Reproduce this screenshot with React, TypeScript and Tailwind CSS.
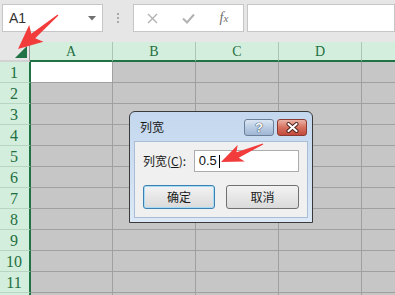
import React from "react";

type Pt = [number, number];

// tapered screenshot-style arrow, tail -> tip
function arrowPoints(tail: Pt, tip: Pt, headLen: number, headW: number, shaftW: number) {
  const dx = tip[0] - tail[0];
  const dy = tip[1] - tail[1];
  const len = Math.hypot(dx, dy);
  const ux = dx / len;
  const uy = dy / len;
  const nx = -uy;
  const ny = ux;
  const base: Pt = [tip[0] - ux * headLen, tip[1] - uy * headLen];
  const barb: Pt = [tip[0] - ux * (headLen + 4), tip[1] - uy * (headLen + 4)];
  const pts: Pt[] = [
    [tail[0] + nx * 0.6, tail[1] + ny * 0.6],
    [base[0] + nx * shaftW, base[1] + ny * shaftW],
    [barb[0] + nx * headW, barb[1] + ny * headW],
    tip,
    [barb[0] - nx * headW, barb[1] - ny * headW],
    [base[0] - nx * shaftW, base[1] - ny * shaftW],
    [tail[0] - nx * 0.6, tail[1] - ny * 0.6],
  ];
  return pts.map((p) => `${p[0].toFixed(1)},${p[1].toFixed(1)}`).join(" ");
}

const columns = ["A", "B", "C", "D", ""];
const rows = [1, 2, 3, 4, 5, 6, 7, 8, 9, 10, 11, 0];

function TopBar() {
  return (
    <div className="flex h-[42px] items-start bg-[#e6e6e6] pl-[2px] pt-[4px]">
      <div className="flex h-[28px] w-[101px] items-center justify-between border border-[#c6c6c6] bg-white pl-[6px] pr-[6px]">
        <span className="font-[family-name:'Liberation_Sans',sans-serif] text-[14px] text-[#333]">A1</span>
        <svg width="8" height="5" viewBox="0 0 8 5">
          <polygon points="0,0 8,0 4,4.5" fill="#707070" />
        </svg>
      </div>
      <div className="flex h-[28px] w-[30px] flex-col items-center justify-center gap-[2px]">
        <div className="h-[2px] w-[2px] bg-[#a8a8a8]" />
        <div className="h-[2px] w-[2px] bg-[#a8a8a8]" />
        <div className="h-[2px] w-[2px] bg-[#a8a8a8]" />
      </div>
      <div className="flex h-[28px] w-[111px] items-center border border-[#c6c6c6] bg-white">
        <div className="flex w-[36px] justify-center">
          <svg width="11" height="11" viewBox="0 0 11 11">
            <path d="M1 1 L10 10 M10 1 L1 10" stroke="#b2b2b2" strokeWidth="1.4" />
          </svg>
        </div>
        <div className="flex w-[36px] justify-center">
          <svg width="13" height="11" viewBox="0 0 13 11">
            <path d="M1 5.5 L5 9.5 L12 1.5" stroke="#b2b2b2" strokeWidth="2" fill="none" />
          </svg>
        </div>
        <div className="flex w-[36px] justify-center">
          <span className="font-[family-name:'Liberation_Serif',serif] text-[14px] italic leading-none text-[#6e6e6e]">
            f<span className="text-[11px]">x</span>
          </span>
        </div>
      </div>
      <div className="ml-[3px] h-[28px] flex-1 border border-[#c6c6c6] bg-white" />
    </div>
  );
}

function Sheet() {
  return (
    <div className="font-[family-name:'Liberation_Serif',serif] font-normal text-[#1f6e41]">
      <div className="flex h-[20px]">
        <div className="relative h-full w-[30px] shrink-0 border-r border-b-2 border-r-[#9a9a9a] border-b-[#d2d2d2] bg-[#e6e6e6]">
          <svg className="absolute left-[15px] top-[4px]" width="12" height="12" viewBox="0 0 12 12">
            <polygon points="0,12 12,12 12,0" fill="#217346" />
          </svg>
        </div>
        {columns.map((c, i) => (
          <div
            key={i}
            className="flex h-full w-[83px] shrink-0 items-center justify-center border-r border-b-2 border-r-[#a9c7b4] border-b-[#217346] bg-[#d3eedc] pt-[1px] text-[14px] leading-none"
          >
            {c}
          </div>
        ))}
      </div>
      {rows.map((r, ri) => (
        <div key={ri} className="flex h-[21px]">
          <div className="flex h-full w-[31px] shrink-0 items-center justify-center border-r-2 border-b border-r-[#217346] border-b-[#b8d5c2] bg-[#d3eedc] pr-[1px] pt-[1px] text-[16px] leading-none">
            {r > 0 ? r : ""}
          </div>
          {columns.map((c, i) => (
            <div
              key={i}
              className={
                (i === 0 ? "w-[82px] " : "w-[83px] ") +
                "h-full shrink-0 border-r border-b border-[#a0a0a0] " +
                (r === 1 && i === 0 ? "bg-white" : "bg-[#c6c6c6]")
              }
            />
          ))}
        </div>
      ))}
    </div>
  );
}

function ColumnWidthDialog() {
  return (
    <div className="absolute left-[129px] top-[111px] flex h-[112px] w-[184px] flex-col rounded-t-[6px] border border-[#3a3a3a] bg-gradient-to-b from-[#c3d7ee] to-[#dce8f5] px-[4px] pb-[4px] font-[family-name:'Noto_Sans_CJK_SC',sans-serif]">
      <div className="flex h-[29px] items-center justify-between pl-[6px] pr-[1px]">
        <span className="text-[12px] text-[#1a1a1a]">列宽</span>
        <div className="mt-[2px] flex gap-[3px]">
          <div className="flex h-[17px] w-[30px] items-center justify-center rounded-[3px] border border-[#6c7f98] bg-gradient-to-b from-[#dbe6f3] via-[#b9cce3] to-[#9fb6d4]">
            <span className="font-[family-name:'Liberation_Sans',sans-serif] text-[13px] font-bold leading-none text-white [text-shadow:0_0_1px_#1f2f45,0_0_1px_#1f2f45]">
              ?
            </span>
          </div>
          <div className="flex h-[17px] w-[30px] items-center justify-center rounded-[3px] border border-[#8a3a32] bg-gradient-to-b from-[#eab3a6] via-[#d6705f] to-[#c24a3c]">
            <svg width="13" height="11" viewBox="0 0 13 11">
              <path d="M2.5 2 L10.5 9 M10.5 2 L2.5 9" stroke="#4a1d18" strokeWidth="4" strokeLinecap="round" />
              <path d="M2.5 2 L10.5 9 M10.5 2 L2.5 9" stroke="#ffffff" strokeWidth="2.2" strokeLinecap="round" />
            </svg>
          </div>
        </div>
      </div>
      <div className="flex flex-1 flex-col border border-[#a9bed6] bg-[#f0f0f0] px-[8px] pt-[8px]">
        <div className="flex items-center">
          <span className="w-[52px] text-[12px] text-[#1a1a1a]">
            列宽(<span className="underline">C</span>):
          </span>
          <div className="flex h-[22px] w-[108px] items-center border border-[#acacac] bg-white pl-[4px]">
            <span className="font-[family-name:'Liberation_Sans',sans-serif] text-[13px] text-[#111]">0.5</span>
            <div className="ml-[2px] h-[13px] w-[1px] bg-black" />
          </div>
        </div>
        <div className="mt-[13px] flex gap-[11px]">
          <div className="flex h-[24px] w-[74px] items-center justify-center rounded-[3px] border border-[#3c7fb1] bg-gradient-to-b from-[#f3f3f3] to-[#dadada] text-[12px] text-[#1a1a1a] shadow-[inset_0_0_0_1px_#a7dcf6]">
            确定
          </div>
          <div className="flex h-[24px] w-[75px] items-center justify-center rounded-[3px] border border-[#707070] bg-gradient-to-b from-[#f3f3f3] to-[#dadada] text-[12px] text-[#1a1a1a]">
            取消
          </div>
        </div>
      </div>
    </div>
  );
}

export default function App() {
  return (
    <div className="relative h-[295px] w-[395px] overflow-hidden bg-[#e6e6e6]">
      <TopBar />
      <Sheet />
      <ColumnWidthDialog />
      <svg className="pointer-events-none absolute left-0 top-0" width="395" height="295">
        <polygon points={arrowPoints([58, 15], [18, 49], 20, 11, 3)} fill="#f23b3b" />
        <polygon points={arrowPoints([263, 144], [221, 162], 18, 9, 3)} fill="#f23b3b" />
      </svg>
    </div>
  );
}
